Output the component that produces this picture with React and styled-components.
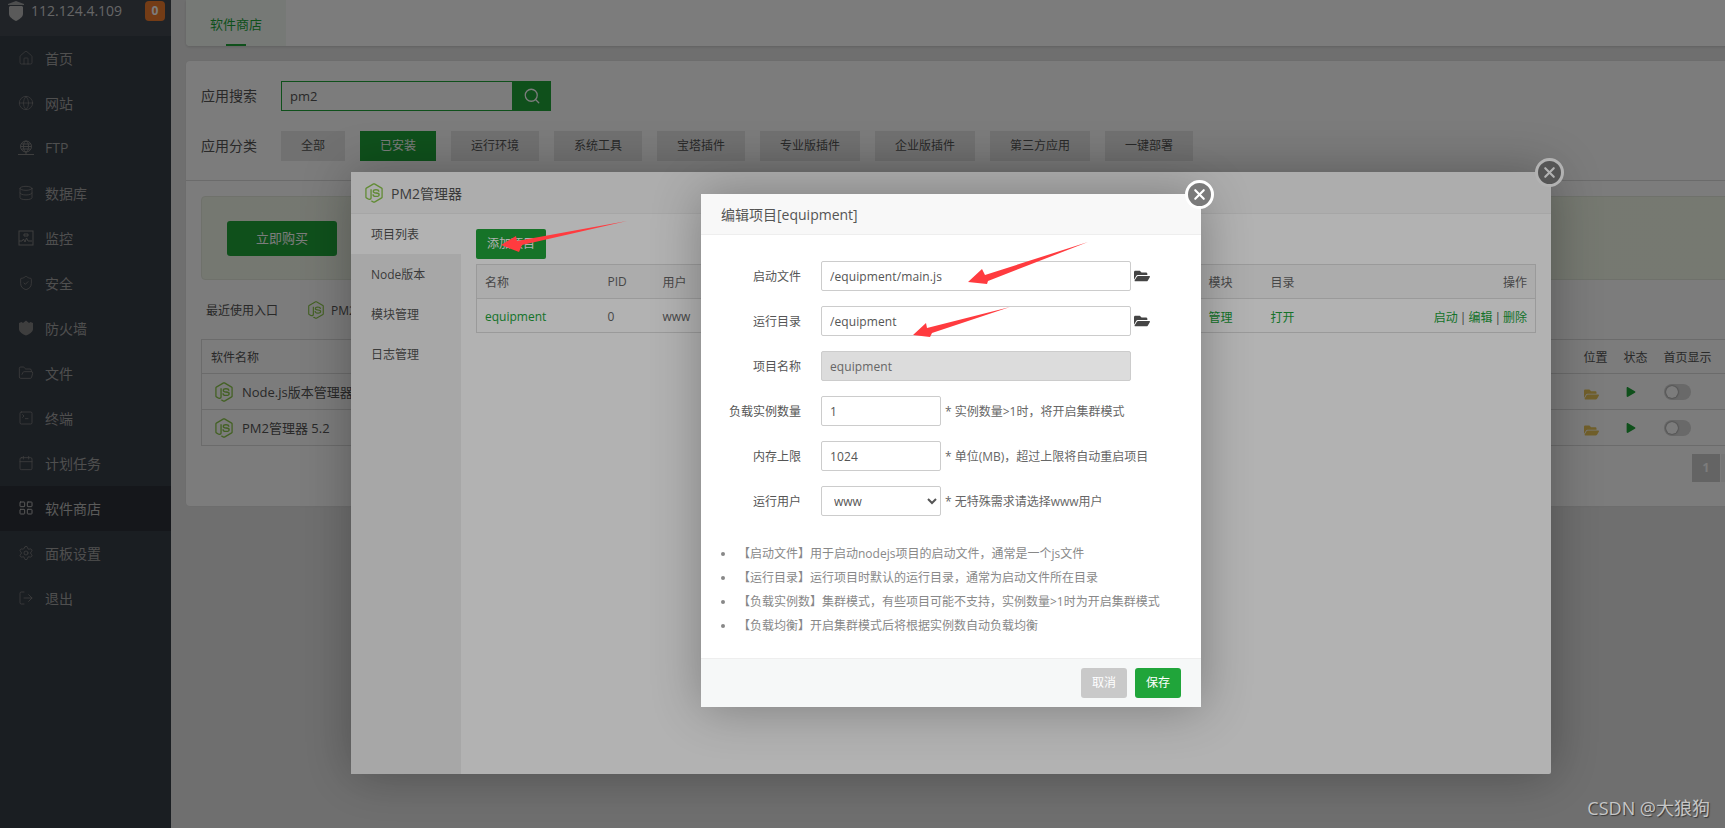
import React from "react";
import styled, { createGlobalStyle } from "styled-components";
import {
  House, Globe, Database, ShieldCheck, FolderOpen, SquareTerminal, Calendar,
  LayoutGrid, Settings, LogOut, Search, X,
} from "lucide-react";
import { FaNodeJs, FaFolderOpen, FaPlay } from "react-icons/fa";

const GREEN = "#20a53a";

const Global = createGlobalStyle`
  html, body { margin: 0; padding: 0; height: 828px; overflow: hidden; background: #f0f0f0; }
  body { font-family: "Open Sans", "Noto Sans CJK SC", sans-serif; font-size: 12px; color: #666; }
  * { box-sizing: border-box; }
`;

const Screen = styled.div`
  position: relative; width: 1725px; height: 828px; overflow: hidden; display: flex; background: #e6e6e6;
`;

/* sidebar */
const Sidebar = styled.aside`
  width: 171px; flex: none; height: 100%; background: #373e47; display: flex; flex-direction: column;
`;
const SideHead = styled.div`
  height: 36px; display: flex; align-items: flex-start; padding: 1px 6px 0 7px; background: #434952;
  color: #d2d2d2; font-size: 14px; line-height: 20px;
`;
const Ip = styled.span` margin-left: 6px; flex: 1; `;
const Badge = styled.span`
  width: 20px; height: 20px; border-radius: 4px; background: #ef7c2f; color: #fff; font-weight: 700;
  font-size: 12px; display: flex; align-items: center; justify-content: center;
`;
const SideItem = styled.div`
  height: 45px; display: flex; align-items: center; padding: 0 0 2px 18px; gap: 11px; font-size: 14px;
  color: ${p => (p.$active ? "#bcbcbc" : "#a2a2a2")};
  background: ${p => (p.$active ? "#2d3138" : "transparent")};
  svg { width: 16px; height: 16px; flex: none; color: ${p => (p.$active ? "#b5b5b5" : "#828282")}; }
`;

/* main */
const Main = styled.main`
  width: 1554px; flex: none; padding: 0 0 0 15px;
`;
const TabBar = styled.div`
  height: 46px; width: 1560px; background: #fff; border-radius: 0 0 4px 4px; display: flex;
  box-shadow: 0 1px 3px rgba(0,0,0,.15);
`;
const Tab = styled.div`
  position: relative; width: 100px; padding-left: 24px; line-height: 48px; font-size: 13px; color: ${GREEN};
  background: #f2f9f3; border-radius: 0 0 0 4px;
  &::after { content: ""; position: absolute; left: 40px; bottom: 0; width: 20px; height: 2px; background: ${GREEN}; }
`;
const Card = styled.section`
  margin-top: 15px; width: 1560px; height: 445px; background: #fff; border-radius: 4px;
  box-shadow: 0 0 3px rgba(0,0,0,.06);
`;
const Filter = styled.div`
  height: 120px; padding: 20px 15px 0; border-bottom: 1px solid #ddd;
`;
const FilterRow = styled.div`
  display: flex; align-items: center; height: 30px; margin-bottom: 20px; font-size: 14px; color: #555;
`;
const FilterLabel = styled.span` width: 80px; flex: none; line-height: 28px; `;
const SearchInput = styled.input`
  width: 231px; height: 30px; border: 1px solid ${GREEN}; border-right: 0; padding: 0 8px; outline: 0;
  font: inherit; font-size: 13px; color: #555; background: #fff;
`;
const SearchBtn = styled.button`
  width: 39px; height: 30px; border: 0; background: ${GREEN}; color: #fff; padding: 0;
  display: flex; align-items: center; justify-content: center;
`;
const Cats = styled.div` display: flex; gap: 15px; `;
const Cat = styled.div`
  width: ${p => p.$w}px; height: 30px; line-height: 30px; text-align: center; font-size: 12px;
  background: ${p => (p.$on ? GREEN : "#e8e8e8")}; color: ${p => (p.$on ? "#fff" : "#555")};
`;
const Promo = styled.div`
  margin: 15px 15px 0; height: 84px; display: flex; align-items: center; padding-left: 25px;
  border: 1px solid #e4eadd; border-radius: 4px; background: linear-gradient(90deg, #f1f6ea, #f3f9e8);
`;
const BuyBtn = styled.div`
  width: 110px; height: 35px; line-height: 35px; text-align: center; background: ${GREEN}; color: #fff;
  font-size: 13px; border-radius: 3px;
`;
const Recent = styled.div`
  height: 59px; display: flex; align-items: center; padding-left: 20px; color: #555; font-size: 12px;
`;
const RecentLink = styled.span`
  display: flex; align-items: center; gap: 6px; margin-left: 29px; font-size: 12px; width: 45px;
  overflow: hidden; white-space: nowrap; flex: none;
  svg { flex: none; }
`;
const SoftTable = styled.table`
  margin-left: 15px; width: 1530px; border-collapse: collapse; table-layout: fixed; border: 1px solid #ddd;
  font-size: 12px; color: #555;
  th { height: 34px; font-weight: 400; text-align: left; padding: 0 0 0 9px; }
  td { height: 36px; padding: 0 0 0 9px; border-top: 1px solid #ddd; font-size: 13px; }
`;
const NameCell = styled.span`
  display: flex; align-items: center; gap: 8px; margin-left: 3px; white-space: nowrap;
`;
const StateIcon = styled.span`
  display: block; height: 15px; line-height: 15px; margin: 5px 0 0 ${p => p.$ml || 0}px;
  svg { display: block; }
`;
const Switch = styled.span`
  display: block; position: relative; width: 27px; height: 16px; border-radius: 8px; background: #d8d8d8;
  &::after { content: ""; position: absolute; left: 2px; top: 2px; width: 12px; height: 12px; border-radius: 50%;
    background: #fff; box-shadow: 0 0 2px rgba(0,0,0,.6); }
`;
const Pager = styled.div`
  display: flex; justify-content: flex-end; gap: 1px; margin: 8px 0 0; padding-right: 15px; font-size: 12px; font-weight: 700;
`;
const PageBox = styled.span`
  width: ${p => p.$w}px; height: 28px; line-height: 28px; text-align: center;
  background: ${p => (p.$on ? "#cfcfcf" : "#f4f4f4")}; color: #fff;
`;

/* layers */
const Shade = styled.div`
  position: absolute; inset: 0; background: rgba(0,0,0,.3);
`;
const Layer = styled.div`
  position: absolute; left: ${p => p.$x}px; top: ${p => p.$y}px; width: ${p => p.$w}px; height: ${p => p.$h}px;
  background: #fff; box-shadow: 1px 1px 50px rgba(0,0,0,.3); border-radius: 2px; display: flex; flex-direction: column;
`;
const Close = styled.button`
  position: absolute; right: -13px; top: -14px; width: 29px; height: 29px; padding: 0; border-radius: 50%;
  border: 3px solid #fff; background: #7a7a7a; color: #fff; display: flex; align-items: center; justify-content: center;
`;
const PmHead = styled.div`
  height: 42px; flex: none; background: #f8f8f8; border-bottom: 1px solid #eee; display: flex; align-items: center;
  gap: 7px; padding-left: 13px; font-size: 14px; color: #555;
  svg { color: #8cc84b; }
`;
const PmBody = styled.div` flex: 1; display: flex; min-height: 0; `;
const PmMenu = styled.nav` width: 110px; flex: none; background: #f0f0f0; `;
const PmItem = styled.div`
  height: 40px; line-height: 42px; padding-left: 20px; font-size: 12px; color: #555;
  background: ${p => (p.$on ? "#fff" : "transparent")};
`;
const PmMain = styled.div` flex: 1; padding: 15px; `;
const AddBtn = styled.div`
  width: 70px; height: 30px; line-height: 30px; text-align: center; background: ${GREEN}; color: #fff;
  font-size: 12px; border-radius: 2px; margin-bottom: 5px;
`;
const ProjTable = styled.table`
  width: 100%; border-collapse: collapse; table-layout: fixed; border: 1px solid #ddd; font-size: 12px; color: #666;
  th { height: 34px; font-weight: 400; text-align: left; padding: 0 0 0 8px; background: #f6f6f6; }
  td { height: 34px; padding: 2px 0 0 8px; border-top: 1px solid #ddd; }
  th:last-child, td:last-child { text-align: right; padding-right: 8px; }
`;
const Green = styled.span` color: ${GREEN}; `;
const Sep = styled.span` margin: 0 2px; color: #555; `;

const EditHead = styled.div`
  height: 41px; flex: none; background: #f8f8f8; border-bottom: 1px solid #eee; padding-left: 20px;
  line-height: 42px; font-size: 14px; color: #555;
`;
const EditBody = styled.div` flex: 1; padding: 26px 0 0; min-height: 0; `;
const FormRow = styled.div`
  display: flex; align-items: center; height: 30px; margin-bottom: 15px;
`;
const FormLabel = styled.label`
  width: 100px; flex: none; text-align: right; margin-right: 20px; font-size: 12px; color: #555;
`;
const FormInput = styled.input`
  width: ${p => p.$w}px; height: 30px; border: 1px solid #ccc; border-radius: 2px; padding: 0 8px;
  font: inherit; font-size: 12px; color: #555; outline: 0; letter-spacing: .1px;
  background: #fff;
  &:disabled { background: #dcdcdc; color: #666; }
`;
const FormSelect = styled.select`
  width: 120px; height: 30px; border: 1px solid #ccc; border-radius: 2px; padding: 0 8px;
  font: inherit; font-size: 12px; color: #555; background: #fff; outline: 0;
`;
const Hint = styled.span` margin-left: 4px; font-size: 12px; color: #666; white-space: nowrap; `;
const Pick = styled.span`
  margin-left: 3px; display: flex; color: #444; font-size: 16px;
`;
const Notes = styled.ul`
  margin: 26px 0 0; padding: 0 0 0 35px; list-style: disc; color: #888; font-size: 12px;
  li { height: 24px; line-height: 24px; padding-left: 2px; white-space: nowrap; }
`;
const EditFoot = styled.div`
  height: 49px; flex: none; background: #f6f8f8; border-top: 1px solid #eee; display: flex; align-items: center;
  justify-content: flex-end; gap: 8px; padding-right: 20px;
`;
const FootBtn = styled.div`
  width: 46px; height: 30px; line-height: 30px; text-align: center; border-radius: 3px; color: #fff; font-size: 12px;
  background: ${p => (p.$primary ? GREEN : "#c9c9c9")};
`;
const Arrows = styled.svg`
  position: absolute; left: 0; top: 0; width: 1725px; height: 828px; pointer-events: none;
`;
const Watermark = styled.div`
  position: absolute; right: 15px; top: 795px; font-size: 18px; line-height: 26px; color: #c6c6c6;
  text-shadow: 1px 1px 1px rgba(0,0,0,.5); white-space: nowrap;
`;

const ShieldLogo = () => (
  <svg width="18" height="20" viewBox="0 0 18 20" fill="#b9b9b9" style={{ flex: "none" }}>
    <path d="M1 3 9 0l8 3v1H1z" opacity=".8" />
    <path d="M3 5h12l1 1v7c0 3-4 5.500-7 7-3-1.500-7-4-7-7V6z" />
  </svg>
);
const FtpIcon = () => (
  <svg viewBox="0 0 16 16" fill="none" stroke="currentColor" strokeWidth="1">
    <circle cx="8" cy="6.500" r="5.500" /><ellipse cx="8" cy="6.500" rx="2.500" ry="5.500" />
    <path d="M2.500 6.500h11M3.500 4h9M3.500 9h9M8 12v2M0 14.500h16" />
  </svg>
);
const MonitorIcon = () => (
  <svg viewBox="0 0 16 16" fill="none" stroke="currentColor" strokeWidth="1">
    <rect x="1" y="1" width="14" height="14" /><path d="M1 11h3l1.500-2 1.500 3 1.500-4 1.500 3h4" /><path d="M6 4h4v2H6z" />
  </svg>
);
const FirewallIcon = () => (
  <svg viewBox="0 0 16 16" fill="currentColor">
    <path d="M1 3l2.500-1 1.500 1 3-2.500L11 3l1.500-1L15 3v6c0 3-4 5.500-7 6.500C5 14.500 1 12 1 9z" />
  </svg>
);

const menu = [
  ["首页", <House strokeWidth={1} />], ["网站", <Globe strokeWidth={1} />], ["FTP", <FtpIcon />],
  ["数据库", <Database strokeWidth={1.200} />], ["监控", <MonitorIcon />], ["安全", <ShieldCheck strokeWidth={1.200} />],
  ["防火墙", <FirewallIcon />], ["文件", <FolderOpen strokeWidth={1.200} />], ["终端", <SquareTerminal strokeWidth={1.200} />],
  ["计划任务", <Calendar strokeWidth={1.200} />], ["软件商店", <LayoutGrid strokeWidth={1.500} />, true],
  ["面板设置", <Settings strokeWidth={1.200} />], ["退出", <LogOut strokeWidth={1.200} />],
];
const cats = [
  ["全部", 64], ["已安装", 76, true], ["运行环境", 88], ["系统工具", 88], ["宝塔插件", 88],
  ["专业版插件", 100], ["企业版插件", 100], ["第三方应用", 100], ["一键部署", 88],
];
const softs = ["Node.js版本管理器 1.0", "PM2管理器 5.2"];
const notes = [
  "【启动文件】用于启动nodejs项目的启动文件，通常是一个js文件",
  "【运行目录】运行项目时默认的运行目录，通常为启动文件所在目录",
  "【负载实例数】集群模式，有些项目可能不支持，实例数量>1时为开启集群模式",
  "【负载均衡】开启集群模式后将根据实例数自动负载均衡",
];

export default function App() {
  return (
    <Screen>
      <Global />
      <Sidebar>
        <SideHead><ShieldLogo /><Ip>112.124.4.109</Ip><Badge>0</Badge></SideHead>
        {menu.map(([t, icon, on]) => <SideItem key={t} $active={on}>{icon}{t}</SideItem>)}
      </Sidebar>
      <Main>
        <TabBar><Tab>软件商店</Tab></TabBar>
        <Card>
          <Filter>
            <FilterRow>
              <FilterLabel>应用搜索</FilterLabel>
              <SearchInput defaultValue="pm2" />
              <SearchBtn><Search size={18} strokeWidth={1.700} /></SearchBtn>
            </FilterRow>
            <FilterRow>
              <FilterLabel>应用分类</FilterLabel>
              <Cats>{cats.map(([t, w, on]) => <Cat key={t} $w={w} $on={on}>{t}</Cat>)}</Cats>
            </FilterRow>
          </Filter>
          <Promo><BuyBtn>立即购买</BuyBtn></Promo>
          <Recent>最近使用入口<RecentLink><FaNodeJs size={18} color="#8cc84b" />PM2管理器</RecentLink></Recent>
          <SoftTable>
            <colgroup><col /><col width="40" /><col width="40" /><col width="76" /></colgroup>
            <thead><tr><th>软件名称</th><th>位置</th><th>状态</th><th>首页显示</th></tr></thead>
            <tbody>
              {softs.map(s => (
                <tr key={s}>
                  <td><NameCell><FaNodeJs size={20} color="#8cc84b" />{s}</NameCell></td>
                  <td><StateIcon><FaFolderOpen size={15} color="#e8c55a" /></StateIcon></td>
                  <td><StateIcon $ml={2}><FaPlay size={10} color="#20a53a" /></StateIcon></td>
                  <td><Switch /></td>
                </tr>
              ))}
            </tbody>
          </SoftTable>
          <Pager><PageBox $w={28} $on>1</PageBox><PageBox $w={10} /></Pager>
        </Card>
      </Main>

      <Shade />
      <Layer $x={351} $y={172} $w={1200} $h={602}>
        <Close><X size={17} strokeWidth={3} /></Close>
        <PmHead><FaNodeJs size={20} />PM2管理器</PmHead>
        <PmBody>
          <PmMenu>
            <PmItem $on>项目列表</PmItem>
            <PmItem>Node版本</PmItem>
            <PmItem>模块管理</PmItem>
            <PmItem>日志管理</PmItem>
          </PmMenu>
          <PmMain>
            <AddBtn>添加项目</AddBtn>
            <ProjTable>
              <colgroup><col width="123" /><col width="55" /><col width="546" /><col width="62" /><col width="100" /><col /></colgroup>
              <thead><tr><th>名称</th><th>PID</th><th>用户</th><th>模块</th><th>目录</th><th>操作</th></tr></thead>
              <tbody>
                <tr>
                  <td><Green>equipment</Green></td><td>0</td><td>www</td>
                  <td><Green>管理</Green></td><td><Green>打开</Green></td>
                  <td><Green>启动</Green><Sep>|</Sep><Green>编辑</Green><Sep>|</Sep><Green>删除</Green></td>
                </tr>
              </tbody>
            </ProjTable>
          </PmMain>
        </PmBody>
      </Layer>

      <Shade />
      <Layer $x={701} $y={194} $w={500} $h={513}>
        <Close><X size={17} strokeWidth={3} /></Close>
        <EditHead>编辑项目[equipment]</EditHead>
        <EditBody>
          <FormRow>
            <FormLabel>启动文件</FormLabel><FormInput $w={310} defaultValue="/equipment/main.js" />
            <Pick><FaFolderOpen /></Pick>
          </FormRow>
          <FormRow>
            <FormLabel>运行目录</FormLabel><FormInput $w={310} defaultValue="/equipment" />
            <Pick><FaFolderOpen /></Pick>
          </FormRow>
          <FormRow>
            <FormLabel>项目名称</FormLabel><FormInput $w={310} disabled defaultValue="equipment" />
          </FormRow>
          <FormRow>
            <FormLabel>负载实例数量</FormLabel><FormInput $w={120} defaultValue="1" />
            <Hint>* 实例数量&gt;1时，将开启集群模式</Hint>
          </FormRow>
          <FormRow>
            <FormLabel>内存上限</FormLabel><FormInput $w={120} defaultValue="1024" />
            <Hint>* 单位(MB)，超过上限将自动重启项目</Hint>
          </FormRow>
          <FormRow>
            <FormLabel>运行用户</FormLabel>
            <FormSelect defaultValue="www"><option>www</option></FormSelect>
            <Hint>* 无特殊需求请选择www用户</Hint>
          </FormRow>
          <Notes>{notes.map(n => <li key={n}>{n}</li>)}</Notes>
        </EditBody>
        <EditFoot><FootBtn>取消</FootBtn><FootBtn $primary>保存</FootBtn></EditFoot>
      </Layer>

      <Arrows viewBox="0 0 1725 828">
        <polygon fill="#ff3b3f" points="627,221 517,241 516,236 501,245 519,252 522,245" />
        <polygon fill="#ff3b3f" points="1088,242 985,275 982,269 968,282 987,284 988,281" />
        <polygon fill="#ff3b3f" points="1010,307 927,328 926,323 913,335 930,337 932,333" />
      </Arrows>
      <Watermark>CSDN @大狼狗</Watermark>
    </Screen>
  );
}
